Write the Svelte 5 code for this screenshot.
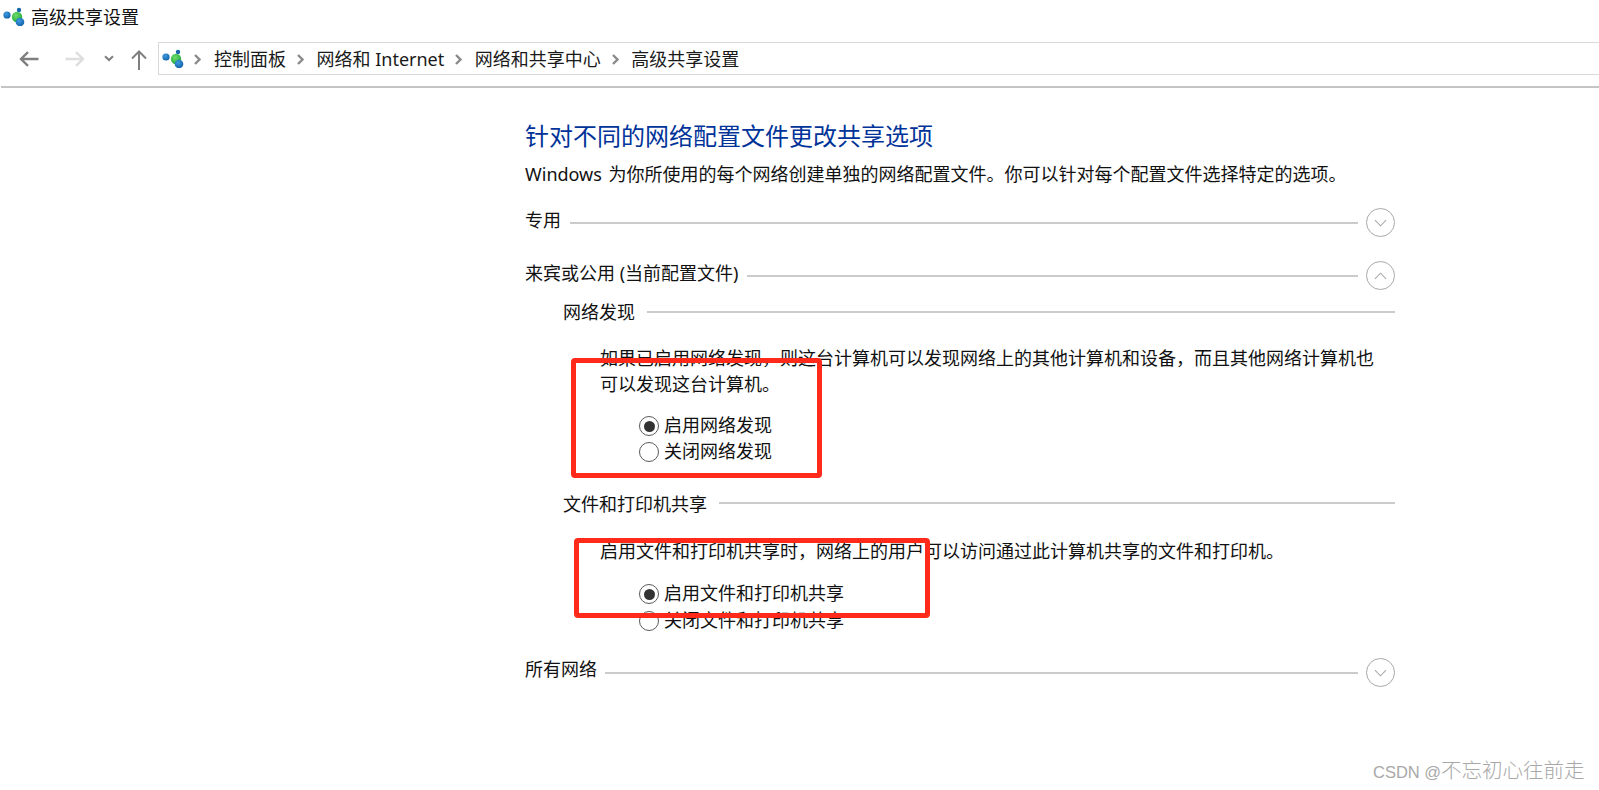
<script>
  const crumbs = ['控制面板', '网络和 Internet', '网络和共享中心', '高级共享设置'];
</script>

{#snippet logo()}
  <svg class="logo" viewBox="0 0 26 26" width="26" height="26" aria-hidden="true">
    <defs>
      <radialGradient id="gb" cx="40%" cy="35%" r="70%"><stop offset="0" stop-color="#3f9be0"/><stop offset="1" stop-color="#0f5fa8"/></radialGradient>
      <radialGradient id="gg" cx="40%" cy="35%" r="70%"><stop offset="0" stop-color="#6fdc6a"/><stop offset="1" stop-color="#1fa83c"/></radialGradient>
    </defs>
    <circle cx="7" cy="15" r="3.6" fill="url(#gb)"/>
    <circle cx="19" cy="10" r="2.2" fill="#1668ad"/>
    <circle cx="17" cy="17" r="5.2" fill="url(#gg)"/>
    <circle cx="20" cy="22" r="4.3" fill="url(#gb)"/>
  </svg>
{/snippet}

{#snippet chevron(up)}
  <span class="toggle">
    <svg viewBox="0 0 14 8" width="13" height="8" aria-hidden="true">
      <path d={up ? 'M1 7L7 1L13 7' : 'M1 1L7 7L13 1'} fill="none" stroke="#a6a6a6" stroke-width="1.1"/>
    </svg>
  </span>
{/snippet}

<div class="window">
  <header class="title">
    {@render logo()}
    <span class="title-text">高级共享设置</span>
  </header>

  <nav class="nav">
    <svg class="nav-icon back" viewBox="0 0 20 16" width="20" height="16" aria-hidden="true">
      <path d="M19.5 8H2M9 1.2L2 8L9 14.8" fill="none" stroke="#7f7f7f" stroke-width="2.4"/>
    </svg>
    <svg class="nav-icon forward" viewBox="0 0 20 16" width="20" height="16" aria-hidden="true">
      <path d="M.5 8H18M11 1.2L18 8L11 14.8" fill="none" stroke="#dedede" stroke-width="2.4"/>
    </svg>
    <svg class="nav-icon down" viewBox="0 0 10 7" width="10" height="7" aria-hidden="true">
      <path d="M1 1.2L5 5L9 1.2" fill="none" stroke="#7f7f7f" stroke-width="2"/>
    </svg>
    <svg class="nav-icon up" viewBox="0 0 16 20" width="16" height="20" aria-hidden="true">
      <path d="M8 20V2M1 8.5L8 1.5L15 8.5" fill="none" stroke="#7f7f7f" stroke-width="2"/>
    </svg>
    <div class="address">
      {@render logo()}
      {#each crumbs as c}
        <svg class="sep" viewBox="0 0 9 11" width="9" height="11" aria-hidden="true">
          <path d="M2 1L6.5 5.5L2 10" fill="none" stroke="#8a8a8a" stroke-width="2.4"/>
        </svg>
        <span class="crumb">{c}</span>
      {/each}
    </div>
  </nav>
  <div class="rule"></div>

  <main class="content">
    <h1>针对不同的网络配置文件更改共享选项</h1>
    <p class="intro">Windows 为你所使用的每个网络创建单独的网络配置文件。你可以针对每个配置文件选择特定的选项。</p>

    <div class="row private"><span class="label">专用</span><span class="line"></span>{@render chevron(false)}</div>
    <div class="row guest"><span class="label">来宾或公用 (当前配置文件)</span><span class="line"></span>{@render chevron(true)}</div>

    <section class="sub">
      <div class="row subhead first"><span class="label">网络发现</span><span class="line full"></span></div>
      <p class="desc d1">如果已启用网络发现，则这台计算机可以发现网络上的其他计算机和设备，而且其他网络计算机也<br/>可以发现这台计算机。</p>
      <div class="radios r1">
        <div class="radio"><span class="dot on"></span>启用网络发现</div>
        <div class="radio"><span class="dot"></span>关闭网络发现</div>
      </div>

      <div class="row subhead second"><span class="label">文件和打印机共享</span><span class="line full"></span></div>
      <p class="desc d2">启用文件和打印机共享时，网络上的用户可以访问通过此计算机共享的文件和打印机。</p>
      <div class="radios r2">
        <div class="radio"><span class="dot on"></span>启用文件和打印机共享</div>
        <div class="radio low"><span class="dot"></span>关闭文件和打印机共享</div>
      </div>
    </section>

    <div class="row all"><span class="label">所有网络</span><span class="line tight"></span>{@render chevron(false)}</div>
  </main>

  <div class="mark mark1"></div>
  <div class="mark mark2"></div>
  <div class="watermark"><span class="wm-latin">CSDN @</span>不忘初心往前走</div>
</div>

<style>
  :global(body) { margin: 0; background: #fff; }
  .window {
    position: relative;
    width: 1599px;
    height: 790px;
    overflow: hidden;
    background: #fff;
    color: #111;
    font-family: "Noto Sans", "Noto Sans CJK SC", sans-serif;
    font-size: 18px;
  }
  .title { height: 36px; display: flex; align-items: center; }
  .title .logo { margin: -10px 0 0 0; flex: none; }
  .title-text { margin-left: 5px; line-height: 35px; padding-bottom: 2px; }

  .nav { height: 33px; margin-top: 6px; display: flex; align-items: center; }
  .nav-icon { flex: none; }
  .back { margin-left: 19px; }
  .forward { margin-left: 26px; }
  .down { margin-left: 19px; }
  .up { margin-left: 17px; margin-top: 3px; }
  .address {
    flex: 1;
    height: 33px;
    margin-left: 11px;
    box-sizing: border-box;
    border: 1.5px solid #d9d9d9;
    border-right: 0;
    display: flex;
    align-items: center;
    color: #1a1a1a;
  }
  .address .logo { margin: -8px 0 0 0; flex: none; }
  .sep { margin: 2px 11.5px 0 10px; flex: none; }
  .address .logo + .sep { margin-left: 8px; margin-right: 12px; }
  .crumb { line-height: 30px; white-space: nowrap; }
  .rule { height: 2px; margin: 11px 0 0 1px; background: #c4c4c4; }

  .content { width: 870px; margin-left: 525px; padding-top: 31px; }
  h1 {
    margin: 0;
    height: 36px;
    line-height: 34px;
    font-size: 24px;
    font-weight: 400;
    color: #003399;
    white-space: nowrap;
  }
  .intro { margin: 6px 0 0; line-height: 26px; white-space: nowrap; word-spacing: 2px; }
  .row { display: flex; align-items: center; height: 30px; }
  .label { white-space: nowrap; flex: none; }
  .private .label { padding-bottom: 8px; }
  .guest .label { padding-bottom: 8px; }
  .first .label { padding-bottom: 2px; }
  .all .label { padding-bottom: 10px; }
  .line { flex: 1; height: 2px; background: #cbcbcb; margin: 0 8px 0 9px; }
  .line.full { margin: 0 0 0 12px; }
  .line.tight { margin-left: 8px; }
  .toggle {
    flex: none;
    width: 29px;
    height: 29px;
    margin-top: -1px;
    box-sizing: border-box;
    border: 1px solid #a9a9a9;
    border-radius: 50%;
    display: flex;
    align-items: center;
    justify-content: center;
  }
  .private { margin-top: 21px; }
  .guest { margin-top: 23px; }
  .sub { padding-left: 38px; }
  .subhead { height: 26px; }
  .first { margin-top: 8px; }
  .second { margin-top: 27px; }
  .desc { margin: 0 0 0 37px; line-height: 26px; white-space: nowrap; }
  .d1 { margin-top: 20px; }
  .d2 { margin-top: 22px; }
  .radios { margin-left: 76px; }
  .r1 { margin-top: 14px; }
  .r2 { margin-top: 15px; }
  .radio { display: flex; align-items: center; height: 26px; white-space: nowrap; }
  .radio.low { margin-top: 1px; }
  .dot {
    flex: none;
    width: 20px;
    height: 20px;
    margin: 4px 5px 0 0;
    box-sizing: border-box;
    border: 1.5px solid #5a5a5a;
    border-radius: 50%;
    display: flex;
    align-items: center;
    justify-content: center;
  }
  .dot.on::after { content: ""; width: 11px; height: 11px; border-radius: 50%; background: #333; }
  .all { margin-top: 26px; }

  .mark { position: absolute; box-sizing: border-box; border: 5px solid #ff2a1a; border-radius: 4px; }
  .mark1 { left: 571px; top: 358px; width: 251px; height: 120px; }
  .mark2 { left: 574px; top: 538px; width: 356px; height: 80px; }
  .watermark {
    position: absolute;
    left: 1373px;
    top: 755px;
    line-height: 30px;
    font-size: 20.5px;
    color: #a8a8a8;
    white-space: nowrap;
    font-weight: 300;
  }
  .wm-latin { font-size: 16.5px; font-family: "Liberation Sans", sans-serif; }
</style>
